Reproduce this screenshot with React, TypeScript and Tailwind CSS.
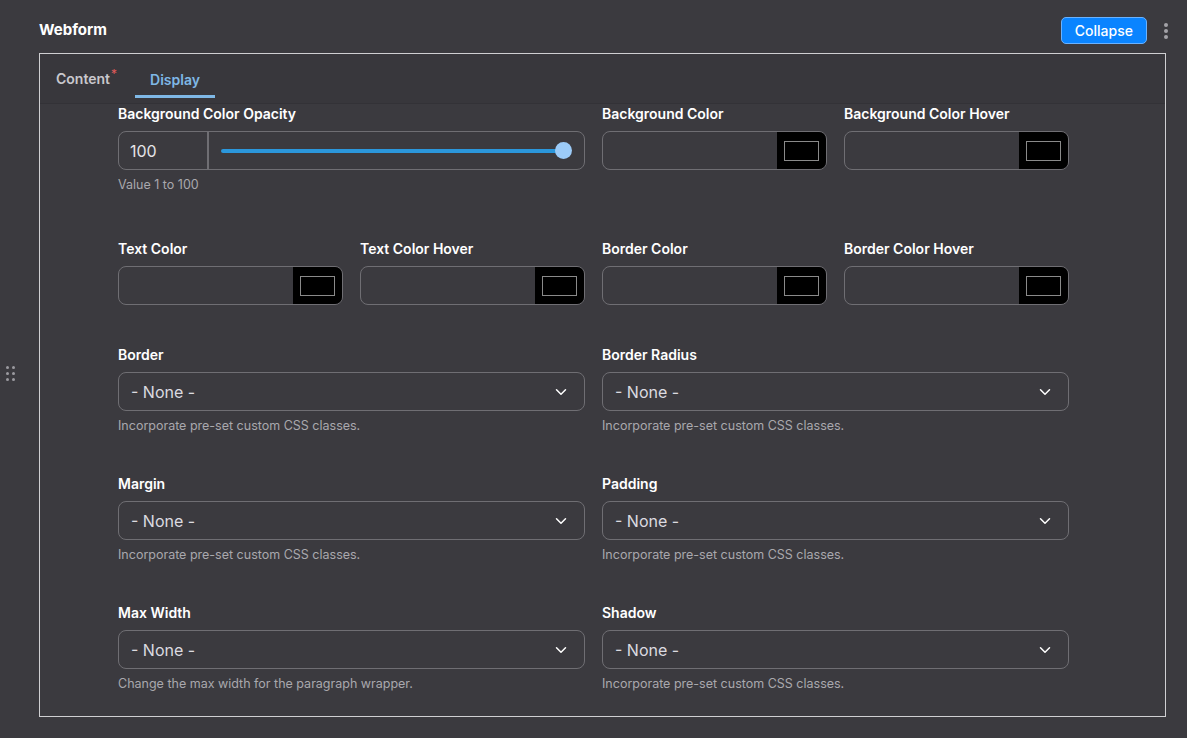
import { ChevronDown } from "lucide-react";

function Label({ children }: { children: React.ReactNode }) {
  return <p className="mb-[7px] h-5 text-sm font-semibold leading-5 text-white">{children}</p>;
}

function Help({ children }: { children: React.ReactNode }) {
  return <p className="mt-[7px] h-4 text-[12.5px] leading-4 text-[#a9a8ad]">{children}</p>;
}

function ColorField({ label }: { label: string }) {
  return (
    <div>
      <Label>{label}</Label>
      <div className="flex h-[39px] overflow-hidden rounded-lg border border-[#6f6e73]">
        <div className="flex-1" />
        <div className="flex w-[49px] items-center justify-center bg-black">
          <div className="h-[20px] w-[35px] border border-[#8a8a8a] bg-black" />
        </div>
      </div>
    </div>
  );
}

function SelectField({ label, help }: { label: string; help: string }) {
  return (
    <div>
      <Label>{label}</Label>
      <div className="flex h-[39px] items-center justify-between rounded-lg border border-[#6f6e73] pl-3 pr-[14px]">
        <span className="text-base text-[#dcdbe0]">- None -</span>
        <ChevronDown className="h-[18px] w-[18px] text-white" strokeWidth={2} />
      </div>
      <Help>{help}</Help>
    </div>
  );
}

const css = "Incorporate pre-set custom CSS classes.";

export default function App() {
  return (
    <div
      className="relative h-[738px] w-full bg-[#3b3a3f] text-white"
      style={{ fontFamily: "Inter, 'Noto Sans', sans-serif" }}
    >
      <div className="absolute left-[6px] top-[366px] grid grid-cols-2 gap-x-[3px] gap-y-[3px]">
        {Array.from({ length: 6 }).map((_, i) => (
          <span key={i} className="h-[3px] w-[3px] rounded-full bg-[#9b9aa0]" />
        ))}
      </div>

      <div className="px-[39px] pt-[17px]">
        <div className="flex h-[27px] items-center justify-between">
          <h2 className="text-[15px] font-bold text-white">Webform</h2>
          <div className="-mr-[20px] flex items-center gap-[17px]">
            <button className="h-[27px] rounded-[5px] border border-[#6ab2ff] bg-[#0a84ff] px-[13px] text-sm font-medium text-white">
              Collapse
            </button>
            <div className="flex flex-col gap-[2px]">
              <span className="h-[4px] w-[4px] rounded-full bg-[#a3a2a8]" />
              <span className="h-[4px] w-[4px] rounded-full bg-[#a3a2a8]" />
              <span className="h-[4px] w-[4px] rounded-full bg-[#a3a2a8]" />
            </div>
          </div>
        </div>

        <div className="mt-[9px] w-[1127px] border border-[#cfcfd2]">
          <div className="flex h-[50px] items-start gap-[18px] border-b border-[#333237] bg-[#38373c] pl-4">
            <div className="flex pt-[15px]">
              <span className="text-sm font-semibold leading-5 text-[#c9c8cd]">Content</span>
              <span className="-mt-[3px] ml-[1px] text-xs text-[#e05a5a]">*</span>
            </div>
            <div className="flex flex-col items-center pt-[16px]">
              <span className="px-[14px] text-sm font-semibold leading-5 text-[#7fb8e6]">Display</span>
              <span className="mt-[5px] h-[3px] w-[80px] bg-[#7fb8e6]" />
            </div>
          </div>

          <div className="pb-[24px] pl-[78px]">
            <div className="grid w-[951px] grid-cols-4 gap-x-[17px]">
              <div className="col-span-2">
                <Label>Background Color Opacity</Label>
                <div className="flex h-[39px] rounded-lg border border-[#6f6e73]">
                  <div className="flex w-[90px] items-center border-r-2 border-[#6f6e73] pl-[11px] text-base text-[#e5e4e8]">
                    100
                  </div>
                  <div className="relative flex flex-1 items-center pl-[12px] pr-[12px]">
                    <div className="h-[4px] flex-1 rounded-full bg-[#2b97dc]" />
                    <div className="-ml-[8px] h-[17px] w-[17px] rounded-full bg-[#9ccbf8]" />
                  </div>
                </div>
                <Help>Value 1 to 100</Help>
              </div>
              <ColorField label="Background Color" />
              <ColorField label="Background Color Hover" />
            </div>

            <div className="mt-[46px] grid w-[951px] grid-cols-4 gap-x-[17px]">
              <ColorField label="Text Color" />
              <ColorField label="Text Color Hover" />
              <ColorField label="Border Color" />
              <ColorField label="Border Color Hover" />
            </div>

            <div className="mt-[40px] grid w-[951px] grid-cols-2 gap-x-[17px] gap-y-[40px]">
              <SelectField label="Border" help={css} />
              <SelectField label="Border Radius" help={css} />
              <SelectField label="Margin" help={css} />
              <SelectField label="Padding" help={css} />
              <SelectField label="Max Width" help="Change the max width for the paragraph wrapper." />
              <SelectField label="Shadow" help={css} />
            </div>
          </div>
        </div>
      </div>
    </div>
  );
}
